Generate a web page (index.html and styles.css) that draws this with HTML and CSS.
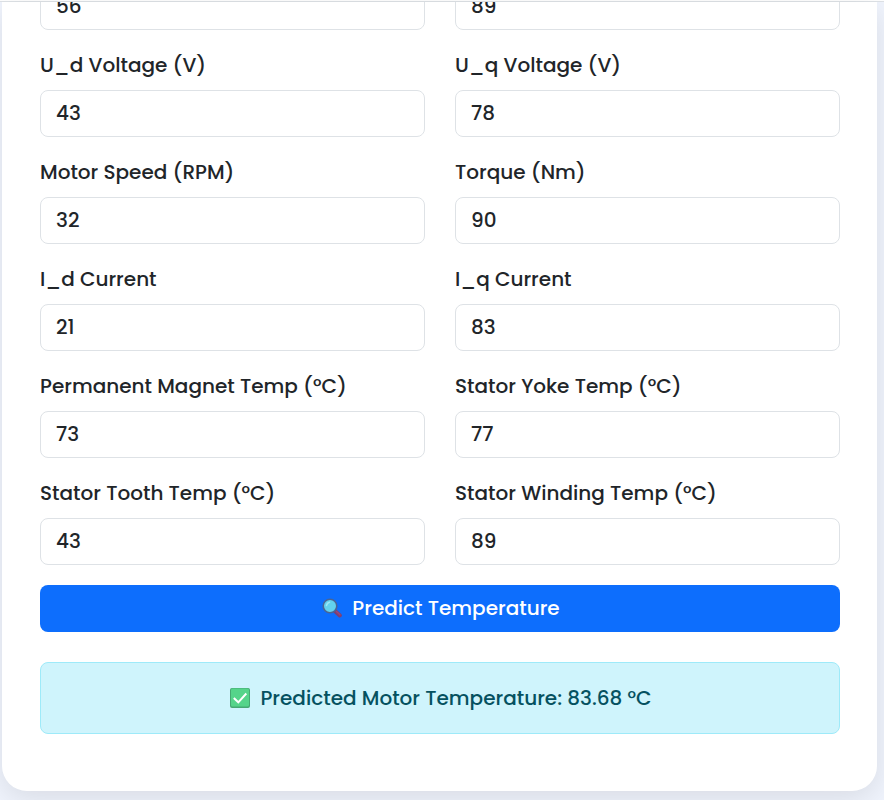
FILE: index.html
```html
<!DOCTYPE html>
<html lang="en">
<head>
<meta charset="utf-8">
<meta name="viewport" content="width=device-width, initial-scale=1">
<title>Motor Temperature</title>
<link rel="stylesheet" href="styles.css">
</head>
<body>
<div class="topline"></div>
<main class="card">
<form class="form">
<div class="grid">
<div class="field"><input class="control" type="text" aria-label="Ambient" value="56"></div>
<div class="field"><input class="control" type="text" aria-label="Coolant" value="89"></div>
<div class="field"><label class="label" for="ud">U_d Voltage (V)</label><input class="control" id="ud" type="text" value="43"></div>
<div class="field"><label class="label" for="uq">U_q Voltage (V)</label><input class="control" id="uq" type="text" value="78"></div>
<div class="field"><label class="label" for="speed">Motor Speed (RPM)</label><input class="control" id="speed" type="text" value="32"></div>
<div class="field"><label class="label" for="torque">Torque (Nm)</label><input class="control" id="torque" type="text" value="90"></div>
<div class="field"><label class="label" for="id">I_d Current</label><input class="control" id="id" type="text" value="21"></div>
<div class="field"><label class="label" for="iq">I_q Current</label><input class="control" id="iq" type="text" value="83"></div>
<div class="field"><label class="label" for="pm">Permanent Magnet Temp (°C)</label><input class="control" id="pm" type="text" value="73"></div>
<div class="field"><label class="label" for="yoke">Stator Yoke Temp (°C)</label><input class="control" id="yoke" type="text" value="77"></div>
<div class="field"><label class="label" for="tooth">Stator Tooth Temp (°C)</label><input class="control" id="tooth" type="text" value="43"></div>
<div class="field"><label class="label" for="winding">Stator Winding Temp (°C)</label><input class="control" id="winding" type="text" value="89"></div>
</div>
<button class="submit" type="button">
<svg class="icon" viewBox="0 0 20 20" aria-hidden="true"><path d="M13 13l4.800 4.500" stroke="#7d3f73" stroke-width="4" stroke-linecap="round"/><path d="M14.500 13.500l3.500 3.200" stroke="#9a4878" stroke-width="1.500" stroke-linecap="round"/><circle cx="8" cy="8" r="6.800" fill="#62d2ee" stroke="#4a6594" stroke-width="1.600"/><path d="M4.500 7.500a4 4 0 0 1 3-3.200" fill="none" stroke="#9ae8f8" stroke-width="1.500" stroke-linecap="round"/></svg>
<span>Predict Temperature</span>
</button>
</form>
<div class="result" role="status">
<svg class="icon" viewBox="0 0 20 20" aria-hidden="true"><rect width="20" height="20" rx="2" fill="#45a872"/><rect x="1" y="0.500" width="18" height="18" rx="1.500" fill="#55d48a"/><path d="M3.800 10l4.500 4.300L16.300 5.500" fill="none" stroke="#fff" stroke-width="2"/></svg>
<span>Predicted Motor Temperature: 83.68 °C</span>
</div>
</main>
</body>
</html>
```
FILE: styles.css
```css
* {
  box-sizing: border-box;
}

body {
  margin: 0;
  min-height: 100vh;
  overflow: hidden;
  background: #f0f4fd;
  color: #212529;
  font: 500 20px/30px Poppins, Inter, sans-serif;
}

.topline {
  height: 2px;
  background: #fff;
  border-bottom: 1px solid #dee2e6;
}

.card {
  margin: 0 7px 9px 2px;
  padding: 0 37px 57px 38px;
  overflow: hidden;
  background: #fff;
  border-radius: 0 0 25px 25px;
  box-shadow: 0 8px 30px rgba(0, 0, 0, 0.1);
}

/* The form is scrolled so that its first row is partly out of view. */
.form {
  margin-top: -19px;
}

.grid {
  display: grid;
  grid-template-columns: 1fr 1fr;
  gap: 20px 30px;
}

.label {
  display: block;
  margin-bottom: 10px;
}

.control {
  display: block;
  width: 100%;
  height: 47px;
  padding: 6px 15px 8px;
  border: 1px solid #dee2e6;
  border-radius: 8px;
  background: #fff;
  color: inherit;
  font: inherit;
}

.submit,
.result {
  display: flex;
  align-items: center;
  justify-content: center;
  gap: 10px;
  width: 100%;
  border-radius: 8px;
  font: inherit;
}

.submit {
  height: 47px;
  margin-top: 20px;
  padding: 0 0 2px 2px;
  border: 0;
  background: #0d6efd;
  color: #fff;
}

.result {
  margin-top: 30px;
  padding: 20px 20px 20px 22px;
  border: 1px solid #9eeaf9;
  background: #cff4fc;
  color: #055160;
}

.icon {
  flex: none;
  width: 20px;
  height: 20px;
}
```
